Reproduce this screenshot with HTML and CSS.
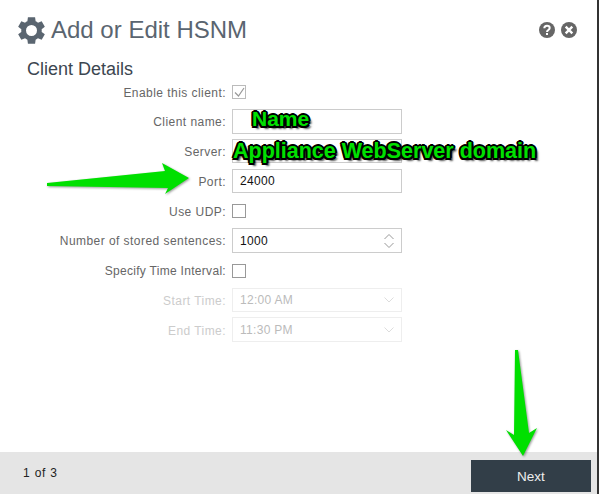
FILE: index.html
```html
<!DOCTYPE html>
<html lang="en">
  <head>
    <meta charset="UTF-8" />
    <title>Add or Edit HSNM</title>
    <link rel="stylesheet" href="styles.css">
  </head>
  <body>
    <div class="dialog">
      <div class="header">
        <svg class="gear" viewBox="0 0 24 24" width="33" height="33">
          <path fill="#5a6570" fill-rule="evenodd" d="M19.4 13a7.600 7.600 0 0 0 0-2l2.300-1.800-2.300-4-2.700 1.100a7.500 7.500 0 0 0-1.700-1L14.600 2.400H9.400L9 5.300a7.500 7.500 0 0 0-1.700 1L4.600 5.200l-2.300 4L4.600 11a7.600 7.600 0 0 0 0 2l-2.300 1.800 2.300 4 2.700-1.100a7.500 7.500 0 0 0 1.700 1l.4 2.900h5.200l.4-2.900a7.500 7.500 0 0 0 1.700-1l2.700 1.100 2.300-4zM12 16a4 4 0 1 1 0-8 4 4 0 0 1 0 8z"/>
        </svg>
        <h1>Add or Edit HSNM</h1>
        <div class="header-icons">
          <svg viewBox="0 0 16 16" width="16" height="16">
            <circle cx="8" cy="8" r="8" fill="#666"/>
            <path fill="none" stroke="#fff" stroke-width="2" d="M5.300 6.200C5.300 4.600 6.500 3.700 8 3.700s2.700.9 2.700 2.300c0 1.900-2.700 2-2.700 3.900"/>
            <rect x="7" y="11" width="2" height="2" fill="#fff"/>
          </svg>
          <svg viewBox="0 0 16 16" width="16" height="16">
            <circle cx="8" cy="8" r="8" fill="#666"/>
            <path stroke="#fff" stroke-width="2.400" d="M4.700 4.700l6.600 6.600M11.300 4.700l-6.600 6.600"/>
          </svg>
        </div>
      </div>

      <h2>Client Details</h2>

      <div class="form">
        <div class="row">
          <label>Enable this client:</label>
          <span class="checkbox checked">
            <svg viewBox="0 0 13 13" width="13" height="13"><path fill="none" stroke="#999" stroke-width="1.200" d="M2 6.500l3.500 3.500 5.500-8"/></svg>
          </span>
        </div>
        <div class="row">
          <label>Client name:</label>
          <div class="field"></div>
        </div>
        <div class="row">
          <label>Server:</label>
          <div class="field"></div>
        </div>
        <div class="row">
          <label>Port:</label>
          <div class="field">24000</div>
        </div>
        <div class="row">
          <label>Use UDP:</label>
          <span class="checkbox"></span>
        </div>
        <div class="row">
          <label>Number of stored sentences:</label>
          <div class="field spinner">
            1000
            <svg viewBox="0 0 12 16" width="12" height="16"><path fill="none" stroke="#999" d="M1.500 6l4.500-4.500L10.500 6M1.500 10l4.500 4.500 4.500-4.500"/></svg>
          </div>
        </div>
        <div class="row">
          <label class="tight">Specify Time Interval:</label>
          <span class="checkbox"></span>
        </div>
        <div class="row disabled">
          <label>Start Time:</label>
          <div class="field select">
            12:00 AM
            <svg viewBox="0 0 12 8" width="12" height="8"><path fill="none" stroke="#ddd" d="M1.500 1.500l4.500 4.500 4.500-4.500"/></svg>
          </div>
        </div>
        <div class="row disabled">
          <label>End Time:</label>
          <div class="field select">
            11:30 PM
            <svg viewBox="0 0 12 8" width="12" height="8"><path fill="none" stroke="#ddd" d="M1.500 1.500l4.500 4.500 4.500-4.500"/></svg>
          </div>
        </div>
      </div>

      <div class="footer">
        <span class="pager">1 of 3</span>
        <button class="next">Next</button>
      </div>

      <!-- annotations drawn on top of the screenshot -->
      <span class="note note-name">Name</span>
      <span class="note note-server">Appliance WebServer domain</span>
      <svg class="arrow arrow-port" viewBox="0 0 150 40" width="150" height="40">
        <path fill="#00e000" d="M1 21L119 9 116 1 143 16 119 32 122 26 1 24z"/>
      </svg>
      <svg class="arrow arrow-next" viewBox="0 0 34 110" width="34" height="110">
        <path fill="#00e000" d="M10 1h3L24 84 32 79 18 107 1 81 9 86z"/>
      </svg>
    </div>
  </body>
</html>
```
FILE: styles.css
```css
html,
body {
  margin: 0;
  padding: 0;
}

body {
  font-family: "Liberation Sans", Arial, sans-serif;
  font-size: 12px;
  background: #fff;
}

.dialog {
  position: relative;
  display: flex;
  flex-direction: column;
  width: 597px;
  height: 494px;
  border-right: 2px solid #333;
  overflow: hidden;
}

.header {
  display: flex;
  align-items: center;
  height: 30px;
  padding: 15px 20px 0 15px;
}

.gear {
  flex: none;
  margin-right: 3px;
}

h1 {
  margin: 0;
  font-size: 24px;
  font-weight: normal;
  color: #5a6570;
}

.header-icons {
  display: flex;
  gap: 6px;
  margin-left: auto;
}

h2 {
  margin: 13px 0 0 27px;
  font-size: 18px;
  line-height: 22px;
  font-weight: normal;
  color: #3c4650;
}

.form {
  flex: 1;
  margin-top: -0.75px;
}

.row {
  display: flex;
  align-items: center;
  height: 24.5px;
  margin-bottom: 5.25px;
}

label {
  width: 226px;
  margin-right: 6px;
  padding-top: 2px;
  text-align: right;
  color: #666;
  letter-spacing: 0.45px;
}

label.tight {
  letter-spacing: 0.3px;
}

.checkbox {
  display: block;
  box-sizing: border-box;
  width: 14px;
  height: 14px;
  margin-top: 1px;
  border: 1px solid #999;
}

.checkbox.checked {
  border-color: #bbb;
}

.checkbox svg {
  display: block;
}

.field {
  display: flex;
  align-items: center;
  justify-content: space-between;
  box-sizing: border-box;
  width: 170px;
  height: 24.5px;
  padding: 1px 6px 0 7px;
  border: 1px solid #ccc;
  color: #111;
  letter-spacing: 0.3px;
}

.disabled label {
  color: #ccc;
}

.disabled .field {
  border-color: #eee;
  color: #bbb;
}

.footer {
  display: flex;
  align-items: center;
  justify-content: space-between;
  height: 42px;
  padding: 0 6px 0 23px;
  background: #e5e5e5;
}

.pager {
  color: #222;
  letter-spacing: 0.4px;
  word-spacing: 1px;
}

.next {
  width: 120px;
  height: 32px;
  margin-top: 6px;
  border: none;
  background: #323e48;
  color: #eee;
  font-family: inherit;
  font-size: 13.500px;
}

.note {
  position: absolute;
  font-weight: bold;
  color: #00e000;
  text-shadow:
    -1.5px -1.5px 0 #000, 1.5px -1.5px 0 #000, -1.5px 1.5px 0 #000, 1.5px 1.5px 0 #000,
    -2px 0 0 #000, 2px 0 0 #000, 0 -2px 0 #000, 0 2px 0 #000,
    3px 3px 2px rgba(0, 0, 0, 0.7);
  white-space: nowrap;
}

.note-name {
  left: 252px;
  top: 107px;
  font-size: 21px;
}

.note-server {
  left: 233px;
  top: 139px;
  font-size: 21.500px;
}

.arrow {
  position: absolute;
  filter: drop-shadow(1px 1px 1px rgba(0, 0, 0, 0.4));
}

.arrow-port {
  left: 46px;
  top: 162px;
}

.arrow-next {
  left: 505px;
  top: 349px;
}
```
